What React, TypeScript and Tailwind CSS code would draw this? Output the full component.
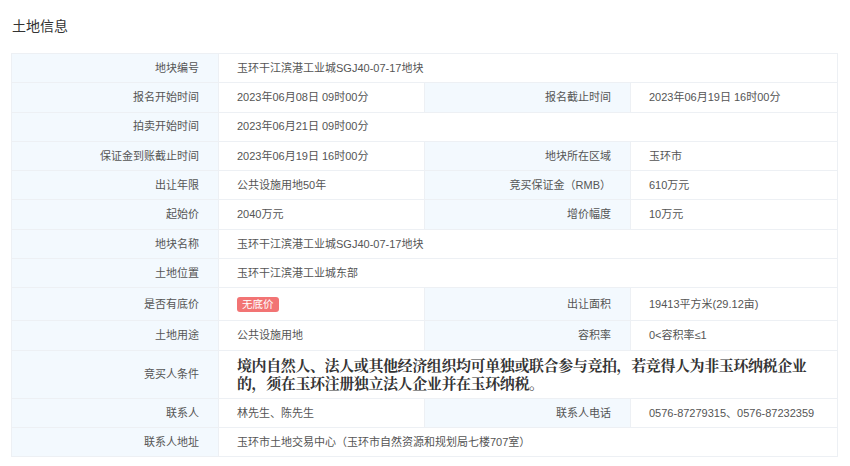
const font = { fontFamily: '"Liberation Sans", "Noto Sans CJK SC", sans-serif' };

type Row = {
  label: string;
  value: React.ReactNode;
  label2?: string;
  value2?: React.ReactNode;
  tall?: string;
};

const data: Row[] = [
  { label: "地块编号", value: "玉环干江滨港工业城SGJ40-07-17地块" },
  { label: "报名开始时间", value: "2023年06月08日 09时00分", label2: "报名截止时间", value2: "2023年06月19日 16时00分" },
  { label: "拍卖开始时间", value: "2023年06月21日 09时00分" },
  { label: "保证金到账截止时间", value: "2023年06月19日 16时00分", label2: "地块所在区域", value2: "玉环市" },
  { label: "出让年限", value: "公共设施用地50年", label2: "竞买保证金（RMB）", value2: "610万元" },
  { label: "起始价", value: "2040万元", label2: "增价幅度", value2: "10万元" },
  { label: "地块名称", value: "玉环干江滨港工业城SGJ40-07-17地块" },
  { label: "土地位置", value: "玉环干江滨港工业城东部" },
  {
    label: "是否有底价",
    value: (
      <span className="inline-block rounded-[3px] bg-[#f27474] px-[5px] text-[10.5px] leading-[15px] text-white">无底价</span>
    ),
    label2: "出让面积",
    value2: "19413平方米(29.12亩)",
    tall: "h-[33px]",
  },
  { label: "土地用途", value: "公共设施用地", label2: "容积率", value2: "0<容积率≤1" },
  {
    label: "竞买人条件",
    value: (
      <div
        className="text-[15px] font-bold leading-[18px] tracking-[-0.4px] text-[#333]"
        style={{ fontFamily: '"Noto Serif CJK SC", "Liberation Serif", "Noto Sans CJK SC", serif' }}
      >
        境内自然人、法人或其他经济组织均可单独或联合参与竞拍，若竞得人为非玉环纳税企业的，须在玉环注册独立法人企业并在玉环纳税。
      </div>
    ),
    tall: "h-[48px]",
  },
  { label: "联系人", value: "林先生、陈先生", label2: "联系人电话", value2: "0576-87279315、0576-87232359" },
  { label: "联系人地址", value: "玉环市土地交易中心（玉环市自然资源和规划局七楼707室）" },
];

export default function App() {
  return (
    <div className="min-h-[466px] bg-white px-[11px] pt-[17px] text-[#555]" style={font}>
      <h2 className="mb-[18px] pl-[1px] text-[14px] leading-[18px] text-[#333]">土地信息</h2>
      <table className="w-[826px] table-fixed border-collapse border border-[#edf0f4] text-[11px]">
        <colgroup>
          <col className="w-[207px]" />
          <col className="w-[206px]" />
          <col className="w-[206px]" />
          <col className="w-[207px]" />
        </colgroup>
        <tbody>
          {data.map((r, i) => (
            <tr key={i} className={r.tall ?? "h-[29.3px]"}>
              <td className="border border-[#edf0f4] bg-[#f3f9fe] pr-[19px] text-right">{r.label}</td>
              {r.label2 ? (
                <>
                  <td className="border border-[#edf0f4] pl-[18px]">{r.value}</td>
                  <td className="border border-[#edf0f4] bg-[#f3f9fe] pr-[19px] text-right">{r.label2}</td>
                  <td className="border border-[#edf0f4] pl-[18px]">{r.value2}</td>
                </>
              ) : (
                <td colSpan={3} className="border border-[#edf0f4] pl-[18px] pr-[18px]">
                  {r.value}
                </td>
              )}
            </tr>
          ))}
        </tbody>
      </table>
    </div>
  );
}
